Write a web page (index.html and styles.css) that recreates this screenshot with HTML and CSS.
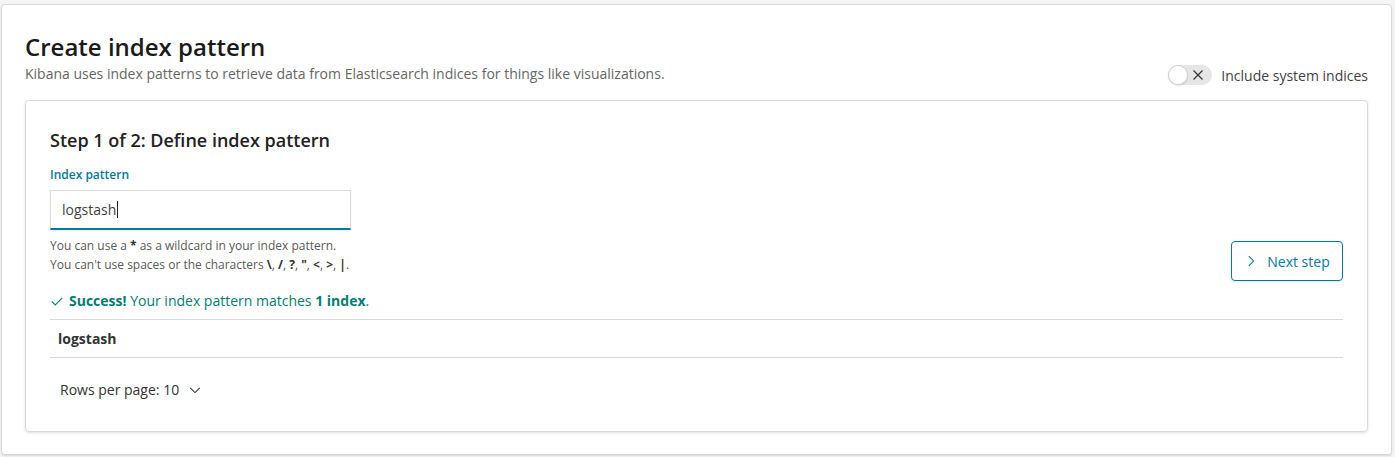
FILE: index.html
```html
<!DOCTYPE html>
<html>
<head>
<meta charset="utf-8">
<link rel="stylesheet" href="styles.css">
</head>
<body>
<div class="page">
  <div class="header">
    <div class="header-text">
      <h1 class="title">Create index pattern</h1>
      <p class="subtitle">Kibana uses index patterns to retrieve data from Elasticsearch indices for things like visualizations.</p>
    </div>
    <div class="switch-wrap">
      <span class="switch">
        <span class="knob"></span>
        <svg class="switch-x" width="12" height="12" viewBox="0 0 12 12"><path d="M1.5 1.5 L10.5 10.5 M10.5 1.5 L1.5 10.5" stroke="#333" stroke-width="1.2" fill="none"/></svg>
      </span>
      <span class="switch-label">Include system indices</span>
    </div>
  </div>
  <div class="panel">
    <h2 class="step-title">Step 1 of 2: Define index pattern</h2>
    <div class="step-row">
      <div class="form">
        <label class="label">Index pattern</label>
        <div class="input"><span class="input-text">logstash</span><span class="caret"></span></div>
        <div class="help">You can use a <b>*</b> as a wildcard in your index pattern.<br>You can't use spaces or the characters <b>\</b>, <b>/</b>, <b>?</b>, <b>"</b>, <b>&lt;</b>, <b>&gt;</b>, <b>|</b>.</div>
      </div>
      <button class="next-btn">
        <svg width="14" height="14" viewBox="0 0 16 16"><path d="M5.5 2.5 L11 8 L5.5 13.5" stroke="#0079a5" stroke-width="1.2" fill="none"/></svg>
        <span>Next step</span>
      </button>
    </div>
    <div class="success">
      <svg width="14" height="14" viewBox="0 0 16 16"><path d="M2 8.5 L6 12.5 L14 4.5" stroke="#017d73" stroke-width="1.2" fill="none"/></svg>
      <span><b>Success!</b> Your index pattern matches <b>1 index</b>.</span>
    </div>
    <div class="table-row">logstash</div>
    <div class="pager">
      <span>Rows per page: 10</span>
      <svg width="14" height="14" viewBox="0 0 16 16"><path d="M2.5 5.5 L8 11 L13.5 5.5" stroke="#333" stroke-width="1.2" fill="none"/></svg>
    </div>
  </div>
</div>
</body>
</html>
```
FILE: styles.css
```css
* { box-sizing: border-box; }
html, body { margin: 0; padding: 0; }
body {
  background: #f5f5f5;
  font-family: "Open Sans", "Noto Sans", sans-serif;
  color: #3f3f3f;
  padding: 4px 3px 2px 1px;
}
.page {
  background: #fff;
  border: 1px solid #d9d9d9;
  border-radius: 4px;
  box-shadow: 0 1px 2px rgba(0,0,0,0.12);
  padding: 26px 23px 23px 23px;
  height: 451px;
}
.header {
  display: flex;
  justify-content: space-between;
  align-items: flex-end;
  margin-bottom: 15px;
}
.title {
  margin: 0;
  font-size: 24px;
  font-weight: 600;
  line-height: 32px;
  color: #1a1a1a;
}
.subtitle {
  margin: 0;
  font-size: 14px;
  line-height: 22px;
  color: #666;
}
.switch-wrap {
  display: flex;
  align-items: center;
  gap: 9px;
  margin-bottom: 0;
}
.switch {
  position: relative;
  width: 44px;
  height: 20px;
  border-radius: 10px;
  background: #e6e6e6;
  display: inline-block;
}
.knob {
  position: absolute;
  left: 0;
  top: 0;
  width: 20px;
  height: 20px;
  border-radius: 50%;
  background: #fff;
  border: 1px solid #d0d0d0;
  box-shadow: 0 1px 2px rgba(0,0,0,0.1);
}
.switch-x {
  position: absolute;
  right: 8px;
  top: 4px;
}
.switch-label {
  font-size: 14px;
  color: #3f3f3f;
}
.panel {
  border: 1px solid #d9d9d9;
  border-radius: 4px;
  box-shadow: 0 1px 3px rgba(0,0,0,0.12);
  padding: 25px 24px 24px 24px;
  height: 332px;
}
.step-title {
  margin: 0 0 13px 0;
  font-size: 18px;
  font-weight: 600;
  line-height: 28px;
  color: #222;
}
.step-row {
  display: flex;
  justify-content: space-between;
  align-items: flex-end;
}
.label {
  display: block;
  font-size: 12px;
  font-weight: 600;
  color: #0079a5;
  line-height: 16px;
  margin-bottom: 7px;
}
.input {
  width: 301px;
  height: 40px;
  border: 1px solid #dcdcdc;
  border-bottom: 2px solid #0079a5;
  background: #fff;
  padding: 0 11px;
  display: flex;
  align-items: center;
  font-size: 14px;
  color: #3f3f3f;
  box-shadow: 0 1px 2px rgba(0,0,0,0.08);
}
.input-text { line-height: 20px; }
.caret {
  display: inline-block;
  width: 1px;
  height: 17px;
  background: #222;
  margin-left: 1px;
}
.help {
  margin-top: 6px;
  font-size: 12px;
  line-height: 19px;
  color: #5a5a5a;
}
.help b { font-weight: 700; color: #333; }
.next-btn {
  font-family: inherit;
  height: 40px;
  width: 112px;
  border: 1px solid #0079a5;
  border-radius: 4px;
  background: #fff;
  color: #0079a5;
  font-size: 14px;
  display: flex;
  align-items: center;
  justify-content: center;
  gap: 9px;
  padding: 0 12px;
  margin-bottom: -7px;
  box-shadow: 0 1px 2px rgba(0,0,0,0.1);
}
.success {
  margin-top: 17px;
  display: flex;
  align-items: center;
  gap: 5px;
  font-size: 14px;
  line-height: 20px;
  color: #017d73;
  padding-bottom: 8px;
  border-bottom: 1px solid #d9d9d9;
}
.success b { font-weight: 700; }
.table-row {
  font-size: 14px;
  font-weight: 700;
  color: #333;
  padding: 0 8px;
  height: 38px;
  display: flex;
  align-items: center;
  border-bottom: 1px solid #d9d9d9;
}
.pager {
  display: flex;
  align-items: center;
  gap: 9px;
  padding: 0 10px;
  margin-top: 22px;
  font-size: 14px;
  color: #333;
}
```
